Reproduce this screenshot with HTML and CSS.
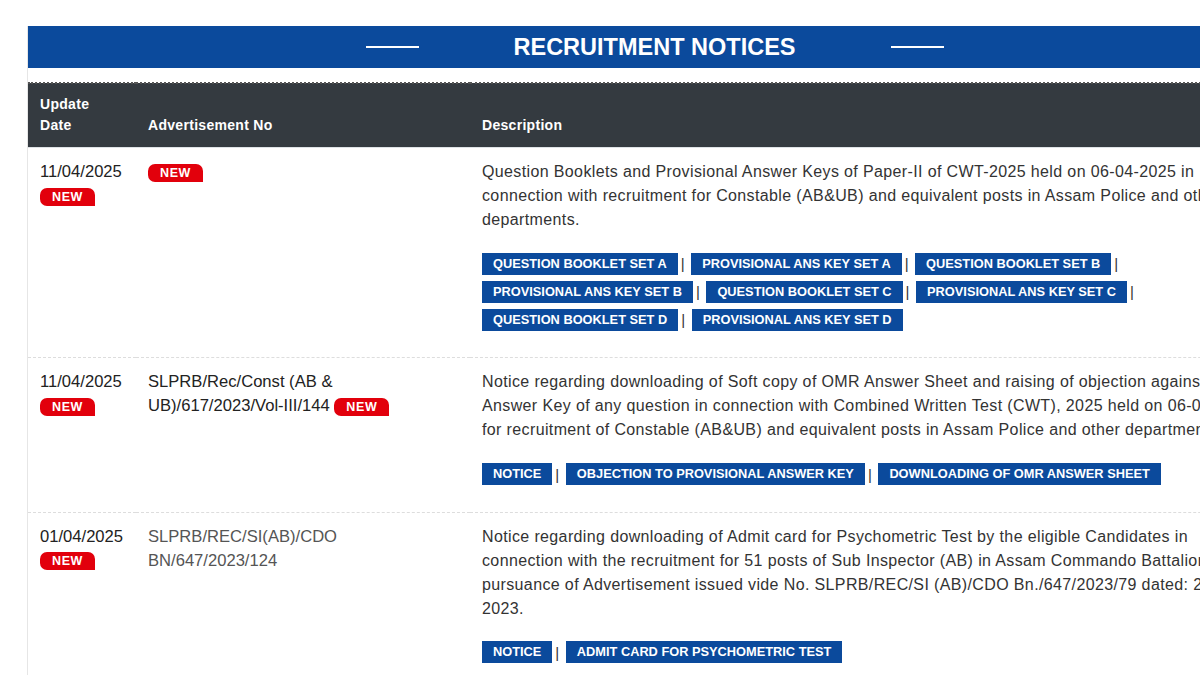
FILE: index.html
```html
<!DOCTYPE html>
<html lang="en">
<head>
<meta charset="utf-8">
<title>Recruitment Notices</title>
<link rel="stylesheet" href="styles.css">
</head>
<body>
<section id="wrapper">
<div class="tit">
  <span class="bar"></span>
  <h2>RECRUITMENT NOTICES</h2>
  <span class="bar"></span>
</div>

<table class="notices" cellspacing="0" cellpadding="0">
  <thead>
  <tr>
    <th class="c1">Update<br>Date</th>
    <th class="c2">Advertisement No</th>
    <th>Description</th>
  </tr>
  </thead>
  <tbody>
  <tr>
    <td class="date">11/04/2025<br><span class="new">NEW</span></td>
    <td class="adv"><span class="new">NEW</span></td>
    <td class="desc">
      <p>Question Booklets and Provisional Answer Keys of Paper-II of CWT-2025 held on 06-04-2025 in<br>
      connection with recruitment for Constable (AB&amp;UB) and equivalent posts in Assam Police and other<br>
      departments.</p>
      <div class="links">
        <a href="#">QUESTION BOOKLET SET A</a><span class="sep">|</span>
        <a href="#">PROVISIONAL ANS KEY SET A</a><span class="sep">|</span>
        <a href="#">QUESTION BOOKLET SET B</a><span class="sep">|</span>
        <a href="#">PROVISIONAL ANS KEY SET B</a><span class="sep">|</span>
        <a href="#">QUESTION BOOKLET SET C</a><span class="sep">|</span>
        <a href="#">PROVISIONAL ANS KEY SET C</a><span class="sep">|</span>
        <a href="#">QUESTION BOOKLET SET D</a><span class="sep">|</span>
        <a href="#">PROVISIONAL ANS KEY SET D</a>
      </div>
    </td>
  </tr>
  <tr>
    <td class="date">11/04/2025<br><span class="new">NEW</span></td>
    <td class="adv">SLPRB/Rec/Const (AB &amp; UB)/617/2023/Vol-III/144 <span class="new">NEW</span></td>
    <td class="desc">
      <p>Notice regarding downloading of Soft copy of OMR Answer Sheet and raising of objection against the<br>
      Answer Key of any question in connection with Combined Written Test (CWT), 2025 held on 06-04-2025<br>
      for recruitment of Constable (AB&amp;UB) and equivalent posts in Assam Police and other departments.</p>
      <div class="links">
        <a href="#">NOTICE</a><span class="sep">|</span>
        <a href="#">OBJECTION TO PROVISIONAL ANSWER KEY</a><span class="sep">|</span>
        <a href="#">DOWNLOADING OF OMR ANSWER SHEET</a>
      </div>
    </td>
  </tr>
  <tr>
    <td class="date">01/04/2025<br><span class="new">NEW</span></td>
    <td class="adv grey">SLPRB/REC/SI(AB)/CDO BN/647/2023/124</td>
    <td class="desc">
      <p>Notice regarding downloading of Admit card for Psychometric Test by the eligible Candidates in<br>
      connection with the recruitment for 51 posts of Sub Inspector (AB) in Assam Commando Battalion in<br>
      pursuance of Advertisement issued vide No. SLPRB/REC/SI (AB)/CDO Bn./647/2023/79 dated: 22-03-<br>
      2023.</p>
      <div class="links">
        <a href="#">NOTICE</a><span class="sep">|</span>
        <a href="#">ADMIT CARD FOR PSYCHOMETRIC TEST</a>
      </div>
    </td>
  </tr>
  </tbody>
</table>
</section>
</body>
</html>
```

FILE: styles.css
```css
html, body {
  margin: 0;
  padding: 0;
  background: #fff;
  overflow: hidden;
}
body {
  font-family: "Liberation Sans", Arial, sans-serif;
  color: #222;
}

#wrapper {
  width: 1253px;
  margin: 26px 0 0 27px;
  border-left: 1px solid #e6e6e6;
  min-height: 700px;
}

/* title bar */
.tit {
  height: 42px;
  background: #0b4a9c;
  display: flex;
  align-items: center;
  justify-content: center;
  gap: 95px;
}
.tit h2 {
  margin: 0;
  color: #fff;
  font-size: 23.5px;
  font-weight: bold;
}
.tit .bar {
  width: 53px;
  height: 2px;
  background: #fff;
}

/* table */
.notices {
  width: 100%;
  margin-top: 14px;
  border-collapse: collapse;
  border-top: 2px dotted #555;
}
.notices th {
  background: #343a40;
  color: #fff;
  font-size: 14px;
  letter-spacing: 0.3px;
  line-height: 21px;
  font-weight: bold;
  text-align: left;
  vertical-align: bottom;
  padding: 10px 12px 11px;
  border-bottom: 1px solid #dee2e6;
}
.notices th.c1 { width: 84px; }
.notices th.c2 { width: 310px; }

.notices td {
  vertical-align: top;
  padding: 12px 12px 24px;
  border-bottom: 1px dashed #ddd;
  font-size: 16.6px;
  line-height: 24px;
}
.adv.grey { color: #555; }

.new {
  display: inline-block;
  background: #e2000c;
  color: #fff;
  font-size: 12.5px;
  font-weight: bold;
  letter-spacing: 0.6px;
  line-height: 18px;
  height: 18px;
  padding: 0 12px;
  border-radius: 7px 7px 0 7px;
  vertical-align: middle;
}

.notices td.desc {
  color: #333;
}
.desc p {
  margin: 0 0 17px;
  font-size: 16px;
  letter-spacing: 0.37px;
  line-height: 24px;
  white-space: nowrap;
}
.links {
  line-height: 27px;
  font-size: 12.8px;
}
.links a {
  display: inline-block;
  background: #0b4a9c;
  color: #fff;
  font-weight: bold;
  line-height: 22px;
  padding: 0 11px;
  text-decoration: none;
  vertical-align: middle;
}
.links .sep {
  color: #333;
  font-size: 15px;
  margin: 0 3px;
  vertical-align: middle;
}
```
